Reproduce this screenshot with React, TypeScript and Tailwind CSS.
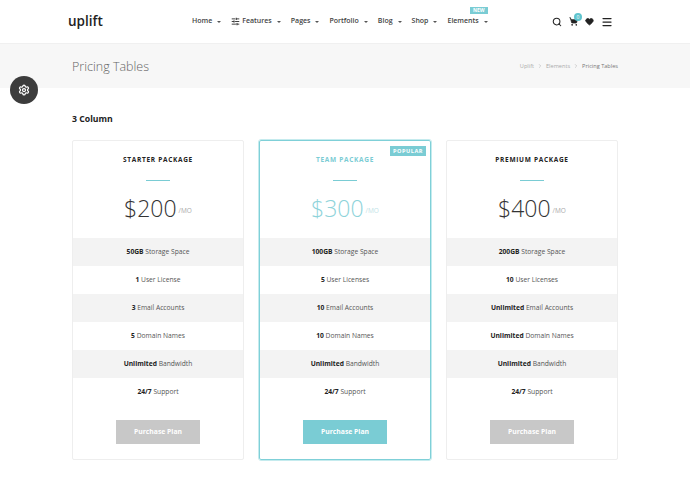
import { ChevronRight, Heart, Menu, Search, Settings, ShoppingCart, SlidersHorizontal } from "lucide-react";

const navItems = ["Home", "Features", "Pages", "Portfolio", "Blog", "Shop", "Elements"];

type Plan = {
  name: string;
  price: string;
  rows: [string, string][];
  popular?: boolean;
};

const plans: Plan[] = [
  {
    name: "STARTER PACKAGE",
    price: "$200",
    rows: [
      ["50GB", "Storage Space"],
      ["1", "User License"],
      ["3", "Email Accounts"],
      ["5", "Domain Names"],
      ["Unlimited", "Bandwidth"],
      ["24/7", "Support"],
    ],
  },
  {
    name: "TEAM PACKAGE",
    price: "$300",
    popular: true,
    rows: [
      ["100GB", "Storage Space"],
      ["5", "User Licenses"],
      ["10", "Email Accounts"],
      ["10", "Domain Names"],
      ["Unlimited", "Bandwidth"],
      ["24/7", "Support"],
    ],
  },
  {
    name: "PREMIUM PACKAGE",
    price: "$400",
    rows: [
      ["200GB", "Storage Space"],
      ["10", "User Licenses"],
      ["Unlimited", "Email Accounts"],
      ["Unlimited", "Domain Names"],
      ["Unlimited", "Bandwidth"],
      ["24/7", "Support"],
    ],
  },
];

function Caret() {
  return <span className="ml-[5px] inline-block border-x-[2px] border-t-[2.5px] border-x-transparent border-t-[#555] align-middle" />;
}

function PricingCard({ plan }: { plan: Plan }) {
  const popular = plan.popular;
  return (
    <div
      className={
        "relative h-[320px] w-[172px] rounded-[2px] border " +
        (popular ? "border-[#7fd0d8] outline outline-[#c5ebee]" : "border-[#eeeeee]")
      }
    >
      {popular && (
        <span className="absolute right-[4px] top-[5px] bg-[#7accd4] px-[3px] text-[5.6px] font-bold leading-[10px] tracking-[0.5px] text-white">
          POPULAR
        </span>
      )}
      <div className={"pt-[14px] text-center text-[6.5px] font-bold leading-[10px] tracking-[0.7px] " + (popular ? "text-[#7accd4]" : "text-[#222]")}>
        {plan.name}
      </div>
      <div className="mx-auto mt-[15px] h-px w-[24px] bg-[#7accd4]" />
      <div className="mt-[5px] flex h-[43px] items-center justify-center">
        <span className={"text-[23px] font-light leading-[30px] " + (popular ? "text-[#8ed3da]" : "text-[#333]")}>{plan.price}</span>
        <span className={"ml-[2px] mt-[7px] text-[6.5px] " + (popular ? "text-[#bfe3e7]" : "text-[#aaa]")}>/MO</span>
      </div>
      <div className="mt-[9px]">
        {plan.rows.map((row, i) => (
          <div key={row[1]} className={"h-[28px] text-center text-[6.7px] leading-[28px] text-[#555] " + (i % 2 === 0 ? "bg-[#f3f3f3]" : "")}>
            <b className="font-bold text-[#222]">{row[0]}</b> {row[1]}
          </div>
        ))}
      </div>
      <div className="mt-[14px] flex justify-center">
        <button
          className={
            "h-[24px] w-[84px] text-[6.8px] font-bold text-white " + (popular ? "bg-[#7accd4]" : "bg-[#c8c8c8]")
          }
        >
          Purchase Plan
        </button>
      </div>
    </div>
  );
}

export default function App() {
  return (
    <div className="relative h-[496px] w-[690px] overflow-hidden bg-white font-['Open_Sans',sans-serif]">
      <header className="flex h-[43px] items-center pl-[68px] pr-[77px]">
        <div className="w-[124px] text-[13.5px] font-semibold leading-none text-[#222]">uplift</div>
        <nav className="flex items-center gap-[10px] text-[7px] font-semibold text-[#444]">
          {navItems.map((item) => (
            <div key={item} className="relative flex items-center whitespace-nowrap">
              {item === "Features" && <SlidersHorizontal size={9} strokeWidth={2.5} className="mr-[2px] text-[#333]" />}
              {item}
              <Caret />
              {item === "Elements" && (
                <span className="absolute -top-[9px] right-0 bg-[#7accd4] px-[3px] text-[5px] font-bold leading-[7px] text-white">NEW</span>
              )}
            </div>
          ))}
        </nav>
        <div className="ml-auto flex items-center gap-[7px] text-[#222]">
          <Search size={10} strokeWidth={2.5} />
          <div className="relative">
            <ShoppingCart size={9} fill="#222" />
            <span className="absolute -right-[4px] -top-[4px] flex h-[8px] w-[8px] items-center justify-center rounded-full bg-[#5fc4ce] text-[5px] leading-none text-white">0</span>
          </div>
          <Heart size={9} fill="#222" />
          <Menu size={12} strokeWidth={2.5} />
        </div>
      </header>
      <div className="flex h-[45px] items-center justify-between border-t border-[#f0f0f0] bg-[#f7f7f7] px-[72px]">
        <h1 className="pt-[2px] text-[12.5px] font-light text-[#666]">Pricing Tables</h1>
        <div className="flex items-center gap-[3px] text-[5.6px] text-[#aaa]">
          <span>Uplift</span>
          <ChevronRight size={6} />
          <span>Elements</span>
          <ChevronRight size={6} />
          <span className="text-[#777]">Pricing Tables</span>
        </div>
      </div>
      <div className="absolute left-[10px] top-[76px] flex h-[28px] w-[28px] items-center justify-center rounded-full bg-[#3c3c3c] text-white">
        <Settings size={12} strokeWidth={2.5} />
      </div>
      <main className="px-[72px] pt-[25px]">
        <h2 className="text-[8.7px] font-bold leading-[13px] text-[#222]">3 Column</h2>
        <div className="mt-[14px] flex justify-between">
          {plans.map((plan) => (
            <PricingCard key={plan.name} plan={plan} />
          ))}
        </div>
      </main>
    </div>
  );
}
